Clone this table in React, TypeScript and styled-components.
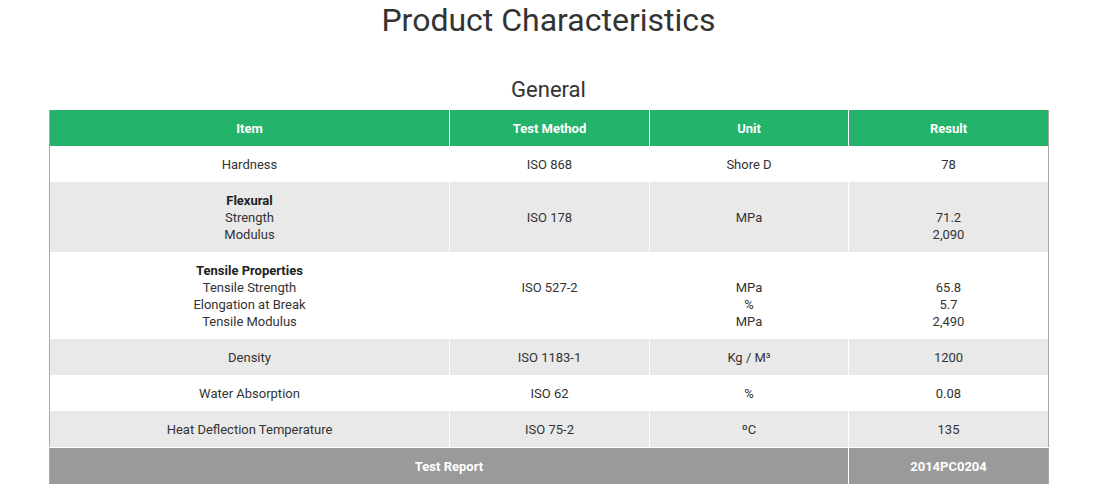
import * as React from 'react';
import styled, { createGlobalStyle } from 'styled-components';

type Row = {
  item: { title?: string; lines: string[] };
  method: string[];
  unit: string[];
  result: string[];
};

const rows: Row[] = [
  { item: { lines: ['Hardness'] }, method: ['ISO 868'], unit: ['Shore D'], result: ['78'] },
  {
    item: { title: 'Flexural', lines: ['Strength', 'Modulus'] },
    method: ['ISO 178'],
    unit: ['MPa'],
    result: ['', '71.2', '2,090'],
  },
  {
    item: { title: 'Tensile Properties', lines: ['Tensile Strength', 'Elongation at Break', 'Tensile Modulus'] },
    method: ['', 'ISO 527-2', '', ''],
    unit: ['', 'MPa', '%', 'MPa'],
    result: ['', '65.8', '5.7', '2,490'],
  },
  { item: { lines: ['Density'] }, method: ['ISO 1183-1'], unit: ['Kg / M³'], result: ['1200'] },
  { item: { lines: ['Water Absorption'] }, method: ['ISO 62'], unit: ['%'], result: ['0.08'] },
  { item: { lines: ['Heat Deflection Temperature'] }, method: ['ISO 75-2'], unit: ['ºC'], result: ['135'] },
];

const GlobalStyle = createGlobalStyle`
  body {
    margin: 0;
    background: #fff;
    font-family: Roboto, "Liberation Sans", sans-serif;
    color: #333;
  }
`;

function Lines({ lines }: { lines: string[] }) {
  return (
    <>
      {lines.map((l, i) => (
        <Line key={i}>{l || '\u00a0'}</Line>
      ))}
    </>
  );
}

function App() {
  return (
    <Page>
      <GlobalStyle />
      <Title>Product Characteristics</Title>
      <Subtitle>General</Subtitle>
      <Table>
        <colgroup>
          <col style={{ width: 400 }} />
          <col style={{ width: 200 }} />
          <col style={{ width: 199 }} />
          <col style={{ width: 200 }} />
        </colgroup>
        <thead>
          <tr>
            <HeadCell>Item</HeadCell>
            <HeadCell>Test Method</HeadCell>
            <HeadCell>Unit</HeadCell>
            <HeadCell>Result</HeadCell>
          </tr>
        </thead>
        <tbody>
          {rows.map((r, i) => (
            <BodyRow key={i} $shade={i % 2 === 1}>
              <Cell>
                {r.item.title && <ItemTitle>{r.item.title}</ItemTitle>}
                <Lines lines={r.item.lines} />
              </Cell>
              <Cell>
                <Lines lines={r.method} />
              </Cell>
              <Cell>
                <Lines lines={r.unit} />
              </Cell>
              <Cell>
                <Lines lines={r.result} />
              </Cell>
            </BodyRow>
          ))}
        </tbody>
        <tfoot>
          <tr>
            <FootCell colSpan={3}>Test Report</FootCell>
            <FootCell>2014PC0204</FootCell>
          </tr>
        </tfoot>
      </Table>
    </Page>
  );
}

const Page = styled.div`
  width: 999px;
  margin-left: 49px;
  padding-bottom: 17px;
`;

const Title = styled.h1`
  margin: 0;
  padding-top: 1px;
  font-size: 32px;
  line-height: 38px;
  font-weight: 400;
  text-align: center;
  color: #333;
`;

const Subtitle = styled.h2`
  margin: 37px 0 7px;
  font-size: 22px;
  line-height: 27px;
  font-weight: 400;
  text-align: center;
  color: #333;
`;

const Table = styled.table`
  width: 999px;
  border-collapse: collapse;
  table-layout: fixed;
  border-left: 1px solid #a9a9a9;
  border-right: 1px solid #a9a9a9;
  font-size: 13px;
  line-height: 17px;
`;

const HeadCell = styled.th`
  height: 36px;
  padding: 0 8px;
  background: #23b36a;
  color: #fff;
  font-size: 13px;
  font-weight: 700;
  text-align: center;
  vertical-align: middle;
  border-left: 1px solid #fff;
  &:first-child {
    border-left: none;
  }
`;

const BodyRow = styled.tr<{ $shade: boolean }>`
  background: ${(p) => (p.$shade ? '#e9e9e9' : '#fff')};
`;

const Cell = styled.td`
  padding: 10px 8px 9px;
  text-align: center;
  vertical-align: middle;
  color: #333;
  border-left: 1px solid #fff;
  &:first-child {
    border-left: none;
  }
`;

const Line = styled.div``;

const ItemTitle = styled.div`
  font-weight: 700;
  color: #222;
`;

const FootCell = styled.td`
  height: 36px;
  padding: 0 8px;
  background: #9a9a9a;
  color: #fff;
  font-weight: 700;
  text-align: center;
  vertical-align: middle;
  border-top: 1px solid #fff;
  border-left: 1px solid #fff;
  &:first-child {
    border-left: none;
  }
`;

export default App;
